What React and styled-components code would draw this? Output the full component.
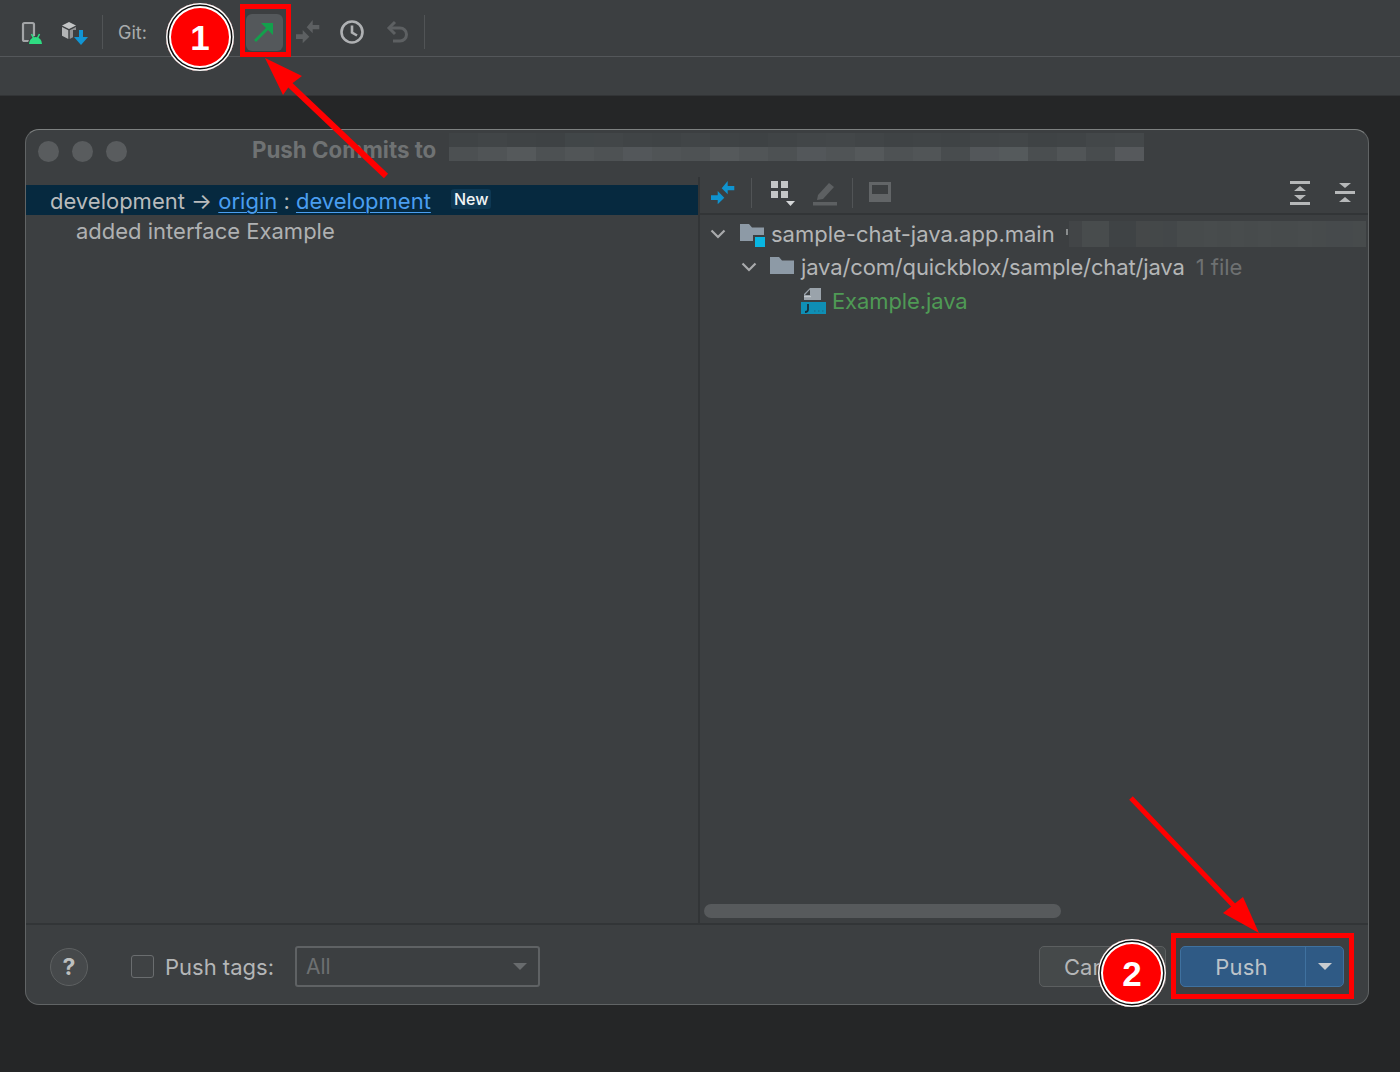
import React from 'react';
import styled, { createGlobalStyle } from 'styled-components';

const GlobalStyle = createGlobalStyle`
    html, body { margin: 0; padding: 0; background: #252627; }
    body { font-family: "Inter", "Liberation Sans", sans-serif; }
    #root { width: 1400px; height: 1072px; overflow: hidden; }
`;

// pixelated bits that hide the repo url in the screenshot
const titleTop = ['#3f4345','#414547','#3f4345','#3e4244','#414648','#424648','#404446','#3f4345','#414547','#3f4345','#3e4244','#404446','#424648','#434749','#414547','#3f4345','#404446','#3f4345','#414547','#424648','#3f4345','#404446','#434749','#44484a'];
const titleBottom = ['#4c5052','#505456','#55595b','#4d5153','#515557','#4e5254','#53575a','#505456','#4e5254','#55595b','#515557','#4d5153','#53575a','#505456','#55595b','#4e5254','#515557','#484c4e','#53575a','#555a5c','#4a4e50','#515557','#484c4e','#56595c'];
const treeCells = ['#424547','#484c4d','#484c4d','#3f4345','#3f4345','#454849','#444849','#434749','#474b4c','#474b4c','#484c4d','#474b4c','#484c4d','#474b4c','#484c4d','#474b4c','#474b4c','#484c4d','#474b4c','#464a4c','#464a4c','#474b4c'];

const Page = styled.div`
    position: relative;
    width: 1400px;
    height: 1072px;
    background: #252627;
    overflow: hidden;
`;
const Toolbar = styled.div`
    height: 57px;
    box-sizing: border-box;
    display: flex;
    align-items: center;
    padding-top: 8px;
    background: #3c3f41;
    border-bottom: 1px solid #54575a;
`;
const SubBar = styled.div`
    height: 38px;
    background: #3c3f41;
    border-bottom: 1px solid #323436;
`;
const Slot = styled.div`
    display: flex;
    align-items: center;
    justify-content: center;
    flex: none;
    width: ${p => p.$w}px;
    height: 37px;
    margin-left: ${p => p.$ml || 0}px;
    border-radius: 6px;
    background: ${p => p.$active ? '#54585b' : 'transparent'};
`;
const ToolSep = styled.div`
    flex: none;
    width: 1px;
    height: ${p => p.$h || 34}px;
    margin-left: ${p => p.$ml || 0}px;
    background: #515456;
`;
const GitLabel = styled.span`
    margin-left: 15px;
    font-size: 18px;
    color: #a9abac;
`;
const Dialog = styled.div`
    width: 1344px;
    height: 876px;
    box-sizing: border-box;
    margin: 33px 0 0 25px;
    display: flex;
    flex-direction: column;
    background: #3c3f41;
    border: 1px solid #616465;
    border-top-color: #7d8080;
    border-radius: 14px;
    overflow: hidden;
`;
const TitleBar = styled.div`
    height: 47px;
    flex: none;
    display: flex;
    align-items: center;
    padding-left: 12px;
    padding-bottom: 4px;
    box-sizing: border-box;
`;
const Light = styled.div`
    width: 21px;
    height: 21px;
    flex: none;
    margin-right: 13px;
    border-radius: 50%;
    background: #595c5e;
`;
const Title = styled.span`
    margin: 0 0 4px 112px;
    font-size: 22.3px;
    font-weight: 700;
    color: #6f7273;
    white-space: nowrap;
`;
const PixelStrip = styled.div`
    display: flex;
    flex-direction: column;
    width: 695px;
    height: 28px;
    margin-left: 13px;
    margin-bottom: 10px;
`;
const PixelRow = styled.div`
    flex: 1;
    display: flex;
`;
const Pixel = styled.div`
    flex: 1;
    background: ${p => p.$c};
`;
const Body = styled.div`
    flex: 1;
    display: flex;
    min-height: 0;
`;
const LeftPane = styled.div`
    width: 672px;
    flex: none;
    padding-top: 8px;
    border-right: 2px solid #323537;
`;
const BranchRow = styled.div`
    height: 30px;
    box-sizing: border-box;
    display: flex;
    align-items: center;
    padding: 2px 0 0 24px;
    background: #06293f;
    font-size: 22px;
    color: #b9bbbc;
    white-space: pre;
`;
const BranchLink = styled.span`
    color: #4a9ef0;
    text-decoration: underline;
    text-underline-offset: 3px;
    text-decoration-thickness: 1px;
`;
const NewBadge = styled.span`
    margin: -4px 0 0 20px;
    padding: 0 3px;
    height: 20px;
    line-height: 20px;
    border-radius: 3px;
    background: #0e3853;
    color: #f2f4f5;
    font-size: 16px;
    font-weight: 500;
`;
const CommitRow = styled.div`
    margin-top: 1px;
    padding-left: 50px;
    height: 30px;
    line-height: 30px;
    font-size: 22px;
    color: #afb1b2;
`;
const RightPane = styled.div`
    flex: 1;
    min-width: 0;
    display: flex;
    flex-direction: column;
`;
const PaneToolbar = styled.div`
    height: 38px;
    flex: none;
    display: flex;
    align-items: center;
    box-sizing: border-box;
    padding: 0 12px 5px 0;
    border-bottom: 2px solid #323537;
`;
const PaneSpacer = styled.div`
    flex: 1;
`;
const PaneIcon = styled.div`
    display: flex;
    flex: none;
    margin-left: ${p => p.$ml || 0}px;
`;
const Tree = styled.div`
    flex: 1;
    padding-top: 2px;
`;
const TreeRow = styled.div`
    height: 33.5px;
    display: flex;
    align-items: center;
    padding-left: ${p => p.$indent}px;
    font-size: 22px;
    color: #b4b6b7;
    white-space: pre;
`;
const TreeGap = styled.div`
    display: flex;
    flex: none;
    margin-right: ${p => p.$mr || 6}px;
`;
const PathText = styled.span`
    letter-spacing: -0.14px;
`;
const Hint = styled.span`
    margin-left: 11px;
    color: #6e7172;
`;
const FileName = styled.span`
    color: #4f9a55;
    letter-spacing: -0.1px;
`;
const TreeTick = styled.div`
    flex: none;
    width: 2px;
    height: 6px;
    margin: -4px 0 0 11px;
    background: #8a8d8e;
`;
const TreePixels = styled.div`
    flex: 1;
    display: flex;
    height: 26px;
    margin: 0 2px 0 1px;
`;
const ScrollTrack = styled.div`
    height: 29px;
    flex: none;
    box-sizing: border-box;
    padding: 10px 0 0 4px;
`;
const ScrollThumb = styled.div`
    width: 357px;
    height: 14px;
    border-radius: 7px;
    background: #575a5c;
`;
const Footer = styled.div`
    height: 81px;
    flex: none;
    box-sizing: border-box;
    display: flex;
    align-items: center;
    padding: 4px 24px 0 24px;
    border-top: 2px solid #323537;
`;
const HelpButton = styled.div`
    width: 38px;
    height: 38px;
    box-sizing: border-box;
    display: flex;
    align-items: center;
    justify-content: center;
    border-radius: 50%;
    background: #46494b;
    border: 1px solid #5e6162;
    color: #bdbfbf;
    font-size: 23px;
    font-weight: 700;
`;
const Checkbox = styled.div`
    width: 23px;
    height: 23px;
    box-sizing: border-box;
    margin-left: 43px;
    border: 1.5px solid #6a6d6f;
    border-radius: 3px;
    background: #3f4244;
`;
const TagsLabel = styled.span`
    margin-left: 11px;
    font-size: 22px;
    color: #b4b6b7;
`;
const TagsSelect = styled.div`
    width: 245px;
    height: 41px;
    box-sizing: border-box;
    margin-left: 21px;
    padding: 0 11px 0 9px;
    display: flex;
    align-items: center;
    justify-content: space-between;
    border: 2px solid #5f6264;
    border-radius: 3px;
    font-size: 21px;
    color: #6d7071;
`;
const Caret = styled.div`
    width: 0;
    height: 0;
    border-left: ${p => p.$s}px solid transparent;
    border-right: ${p => p.$s}px solid transparent;
    border-top: ${p => p.$s * 1.1}px solid ${p => p.$c};
`;
const FooterSpacer = styled.div`
    flex: 1;
`;
const CancelButton = styled.div`
    width: 127px;
    height: 41px;
    box-sizing: border-box;
    padding-left: 24px;
    display: flex;
    align-items: center;
    background: #45494a;
    border: 1.5px solid #5c5f60;
    border-radius: 5px;
    font-size: 22px;
    color: #b4b6b7;
`;
const PushButton = styled.div`
    width: 164px;
    height: 41px;
    box-sizing: border-box;
    margin-left: 14px;
    display: flex;
    background: #2f5a85;
    border: 1.5px solid #3f719f;
    border-radius: 5px;
    font-size: 22px;
    color: #bcc3c9;
`;
const PushLabel = styled.div`
    flex: 1;
    display: flex;
    align-items: center;
    justify-content: center;
    padding-right: 3px;
    letter-spacing: 0.2px;
`;
const PushCaret = styled.div`
    width: 37px;
    display: flex;
    align-items: center;
    justify-content: center;
    border-left: 1.5px solid #3f719f;
`;
const Marker = styled.div`
    position: absolute;
    left: ${p => p.$x - 34}px;
    top: ${p => p.$y - 34}px;
    width: 68px;
    height: 68px;
    box-sizing: border-box;
    padding-top: 2px;
    display: flex;
    align-items: center;
    justify-content: center;
    border-radius: 50%;
    background: #f00;
    box-shadow: inset 0 0 0 1.5px #fff, inset 0 0 0 3px #111, inset 0 0 0 5px #fff;
    color: #fff;
    font-family: "Liberation Sans", sans-serif;
    font-size: 35px;
    font-weight: 700;
`;
const Highlight = styled.div`
    position: absolute;
    left: ${p => p.$x}px;
    top: ${p => p.$y}px;
    width: ${p => p.$w}px;
    height: ${p => p.$h}px;
    box-sizing: border-box;
    border: 5px solid #f00;
`;
const ArrowLayer = styled.svg`
    position: absolute;
    left: 0;
    top: 0;
    width: 1400px;
    height: 1072px;
    pointer-events: none;
`;

const Chevron = () => (
    <svg width="18" height="12" viewBox="0 0 18 12">
        <path d="M2.5 2.5 L9 9 L15.5 2.5" fill="none" stroke="#a9abac" strokeWidth="2.2" />
    </svg>
);

const Folder = ({ module }) => (
    <svg width="26" height="26" viewBox="0 0 26 26">
        <path d="M1 3 H10 L13 6.5 H25 V20 H1 Z" fill="#8d9aa6" />
        {module && <rect x="14" y="14" width="12" height="12" fill="#3c3f41" />}
        {module && <rect x="16" y="16" width="10" height="10" fill="#09b6e2" />}
    </svg>
);

const JavaFile = () => (
    <svg width="26" height="26" viewBox="0 0 26 26">
        <path d="M9 0 H20 V12 H3 V6 Z" fill="#9aa3ab" />
        <path d="M9 1.5 V7 H4 Z" fill="#3c3f41" />
        <rect x="3" y="8" width="7" height="1.2" fill="#c3c8cc" />
        <rect x="0" y="14" width="25" height="12" fill="#0f8fb5" />
        <path d="M7 16 V21.5 Q7 24 4 24" fill="none" stroke="#17303c" strokeWidth="1.8" />
        <path d="M13 23 h1.5 M17 23 h1.5 M21 23 h1.5" stroke="#1a7592" strokeWidth="1.5" />
    </svg>
);

const PairArrows = ({ color }) => (
    <svg width="24" height="24" viewBox="0 0 24 24">
        <path d="M16.7 0 V5 H23.3 V9.3 H16.7 V13.3 L10.7 7.3 Z" fill={color} />
        <path d="M6.7 10 L13.3 16.7 L6.7 23.3 V19 H0 V14.3 H6.7 Z" fill={color} />
    </svg>
);

const App = () => (
    <Page>
        <GlobalStyle />
        <Toolbar>
            <Slot $w={24} $ml={20}>
                <svg width="24" height="26" viewBox="0 0 24 26">
                    <rect x="3" y="4" width="11" height="18" rx="1.5" fill="#4a4d4f" stroke="#a3a5a7" strokeWidth="2.2" />
                    <path d="M8 26 V25 A7.5 8 0 0 1 23 25 V26 Z" fill="#3c3f41" />
                    <path d="M9 25 A6.5 7 0 0 1 22 25 Z" fill="#2fdc82" />
                    <path d="M11.5 15 L13.5 19 M19.5 15 L17.5 19" stroke="#2fdc82" strokeWidth="1.6" />
                </svg>
            </Slot>
            <Slot $w={28} $ml={16}>
                <svg width="28" height="26" viewBox="0 0 28 26">
                    <path d="M9 3 L16 6.5 L9 10 L2 6.5 Z" fill="#c3c5c6" />
                    <path d="M2 8 L8.3 11.3 V20 L2 16.7 Z" fill="#b3b5b6" />
                    <path d="M16 8 L9.7 11.3 V20 L13 18.3 V11 H16 Z" fill="#8f9193" />
                    <path d="M19 11 H23 V18 H28 L21 26 L14 18 H19 Z" fill="#1195d4" />
                </svg>
            </Slot>
            <ToolSep $ml={14} />
            <GitLabel>Git:</GitLabel>
            <Slot $w={37} $ml={99} $active>
                <svg width="24" height="24" viewBox="0 0 24 24">
                    <path d="M3 21 L18 6" stroke="#13a04c" strokeWidth="3" />
                    <path d="M9 3 H21 V15 Z" fill="#13a04c" />
                </svg>
            </Slot>
            <Slot $w={26} $ml={12}>
                <PairArrows color="#5d6062" />
            </Slot>
            <Slot $w={26} $ml={18}>
                <svg width="26" height="26" viewBox="0 0 26 26">
                    <circle cx="13" cy="13" r="10.5" fill="none" stroke="#afb1b3" strokeWidth="2.6" />
                    <path d="M13 6.5 V13.5 L18 16.5" fill="none" stroke="#afb1b3" strokeWidth="2.6" />
                </svg>
            </Slot>
            <Slot $w={26} $ml={20}>
                <svg width="26" height="26" viewBox="0 0 26 26">
                    <path d="M4 9 H15 A6.5 6.5 0 0 1 15 22 H8" fill="none" stroke="#5d6062" strokeWidth="3" />
                    <path d="M10 3 L4 9 L10 15" fill="none" stroke="#5d6062" strokeWidth="3" />
                </svg>
            </Slot>
            <ToolSep $ml={13} />
        </Toolbar>
        <SubBar />
        <Dialog>
            <TitleBar>
                <Light />
                <Light />
                <Light />
                <Title>Push Commits to</Title>
                <PixelStrip>
                    <PixelRow>{titleTop.map((c, i) => <Pixel key={i} $c={c} />)}</PixelRow>
                    <PixelRow>{titleBottom.map((c, i) => <Pixel key={i} $c={c} />)}</PixelRow>
                </PixelStrip>
            </TitleBar>
            <Body>
                <LeftPane>
                    <BranchRow>
                        development → <BranchLink>origin</BranchLink> : <BranchLink>development</BranchLink>
                        <NewBadge>New</NewBadge>
                    </BranchRow>
                    <CommitRow>added interface Example</CommitRow>
                </LeftPane>
                <RightPane>
                    <PaneToolbar>
                        <PaneIcon $ml={11}><PairArrows color="#0f93cf" /></PaneIcon>
                        <ToolSep $ml={16} $h={30} />
                        <PaneIcon $ml={18}>
                            <svg width="26" height="26" viewBox="0 0 26 26">
                                <path d="M1 1 H8 V8 H1 Z M11 1 H18 V8 H11 Z M1 11 H8 V18 H1 Z M11 11 H18 V18 H11 Z" fill="#c4c6c7" />
                                <path d="M16 21 H25 L20.5 26 Z" fill="#d5d7d8" />
                            </svg>
                        </PaneIcon>
                        <PaneIcon $ml={16}>
                            <svg width="26" height="26" viewBox="0 0 26 26">
                                <path d="M6 15 L17 3 L22 7 L11 19 L5 20 Z" fill="#5d6062" />
                                <rect x="1" y="22" width="24" height="3.5" fill="#5d6062" />
                            </svg>
                        </PaneIcon>
                        <ToolSep $ml={14} $h={30} />
                        <PaneIcon $ml={15}>
                            <svg width="24" height="24" viewBox="0 0 24 24">
                                <rect x="1" y="1" width="22" height="20" fill="#626567" />
                                <rect x="4" y="4" width="16" height="9" fill="#3c3f41" />
                            </svg>
                        </PaneIcon>
                        <PaneSpacer />
                        <PaneIcon>
                            <svg width="22" height="26" viewBox="0 0 22 26">
                                <rect x="1" y="1" width="20" height="3" fill="#b6b8b9" />
                                <path d="M11 6 L17 11 H5 Z M5 15 H17 L11 20 Z" fill="#b6b8b9" />
                                <rect x="1" y="22" width="20" height="3" fill="#b6b8b9" />
                            </svg>
                        </PaneIcon>
                        <PaneIcon $ml={23}>
                            <svg width="22" height="26" viewBox="0 0 22 26">
                                <path d="M5 3 H17 L11 8 Z" fill="#b6b8b9" />
                                <rect x="1" y="11" width="20" height="3" fill="#b6b8b9" />
                                <path d="M11 17 L17 22 H5 Z" fill="#b6b8b9" />
                            </svg>
                        </PaneIcon>
                    </PaneToolbar>
                    <Tree>
                        <TreeRow $indent={9}>
                            <TreeGap $mr={12}><Chevron /></TreeGap>
                            <TreeGap $mr={6}><Folder module /></TreeGap>
                            sample-chat-java.app.main
                            <TreeTick />
                            <TreePixels>{treeCells.map((c, i) => <Pixel key={i} $c={c} />)}</TreePixels>
                        </TreeRow>
                        <TreeRow $indent={40}>
                            <TreeGap $mr={11}><Chevron /></TreeGap>
                            <TreeGap $mr={6}><Folder /></TreeGap>
                            <PathText>java/com/quickblox/sample/chat/java</PathText>
                            <Hint>1 file</Hint>
                        </TreeRow>
                        <TreeRow $indent={101}>
                            <TreeGap $mr={5}><JavaFile /></TreeGap>
                            <FileName>Example.java</FileName>
                        </TreeRow>
                    </Tree>
                    <ScrollTrack><ScrollThumb /></ScrollTrack>
                </RightPane>
            </Body>
            <Footer>
                <HelpButton>?</HelpButton>
                <Checkbox />
                <TagsLabel>Push tags:</TagsLabel>
                <TagsSelect>All<Caret $s={7} $c="#686b6d" /></TagsSelect>
                <FooterSpacer />
                <CancelButton>Cancel</CancelButton>
                <PushButton>
                    <PushLabel>Push</PushLabel>
                    <PushCaret><Caret $s={7} $c="#c9cccf" /></PushCaret>
                </PushButton>
            </Footer>
        </Dialog>

        <Highlight $x={240} $y={4} $w={51} $h={53} />
        <Highlight $x={1171} $y={933} $w={183} $h={66} />
        <ArrowLayer viewBox="0 0 1400 1072">
            <line x1="386" y1="176" x2="288" y2="83" stroke="#f00" strokeWidth="6" />
            <polygon points="265,58 302,76 290,85 283,95" fill="#f00" />
            <line x1="1131" y1="798" x2="1235" y2="907" stroke="#f00" strokeWidth="5" />
            <polygon points="1259,933 1223,913 1233,905 1243,897" fill="#f00" />
        </ArrowLayer>
        <Marker $x={200} $y={37}>1</Marker>
        <Marker $x={1132} $y={973}>2</Marker>
    </Page>
);

export default App;
